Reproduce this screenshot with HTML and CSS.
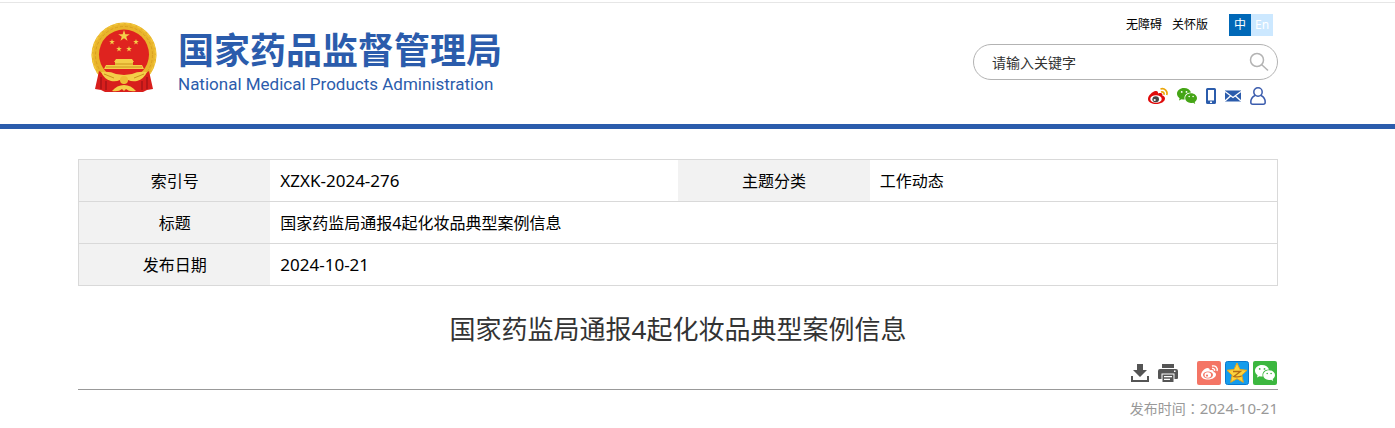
FILE: index.html
```html
<!DOCTYPE html>
<html lang="zh-CN">
<head>
<meta charset="utf-8">
<title>国家药监局通报4起化妆品典型案例信息</title>
<link rel="stylesheet" href="styles.css">
</head>
<body>
<svg class="defs" width="0" height="0" aria-hidden="true">
  <symbol id="star" viewBox="-10 -10 20 20"><path d="M0-10 2.3-3.1H9.6L3.7 1.2 5.9 8.1 0 3.8-5.9 8.1-3.7 1.2-9.6-3.1H-2.3Z"/></symbol>
  <symbol id="wechat" viewBox="0 0 20 16">
    <path fill-rule="evenodd" d="M7 0C3 0 0 2.5 0 5.8c0 1.9 1 3.4 2.6 4.5L2 12.5l2.5-1.3c.9.2 1.7.4 2.7.4h.5C6.6 7.700 9.500 4.400 14 4.500 13.300 1.800 10.500 0 7 0ZM4.700 3a.9.9 0 1 1 0 1.800.9.9 0 0 1 0-1.800ZM9.500 3a.9.9 0 1 1 0 1.800.9.9 0 0 1 0-1.800Z"/>
    <path fill-rule="evenodd" d="M14 5.200c-3.300 0-5.800 2.200-5.800 4.900s2.500 4.900 5.800 4.900c.8 0 1.400-.1 2.100-.3L18.200 16l-.5-1.900c1.400-.9 2.300-2.300 2.300-4 0-2.700-2.700-4.900-6-4.900ZM12.200 7.700a.8.8 0 1 1 0 1.600.8.8 0 0 1 0-1.600ZM16.100 7.700a.8.8 0 1 1 0 1.600.8.8 0 0 1 0-1.600Z"/>
  </symbol>
</svg>

<header class="site-header">
  <div class="container header-row">
    <a class="brand" href="#">
      <svg class="emblem" width="68" height="72" viewBox="0 0 68 72" aria-hidden="true">
        <circle cx="34" cy="33" r="32.500" fill="#e9b52c"/>
        <circle cx="34" cy="33" r="28.500" fill="none" stroke="#d9a021" stroke-width="1" stroke-dasharray="3 2"/>
        <circle cx="34" cy="33" r="31.500" fill="none" stroke="#f2c73c" stroke-width="1.500" stroke-dasharray="4 2"/>
        <circle cx="34" cy="32.500" r="25" fill="#df231f"/>
        <path fill="#d81e1c" d="M9 49q5 4 11 4h28q6 0 11-4l4 18-6 1-4 2H15l-4-2-6-1Z"/>
        <path fill="none" stroke="#a81517" stroke-width="1.500" d="M11 55v12M16 59v9M52 59v9M57 55v12"/>
        <g fill="#f4cf49">
          <use href="#star" x="28" y="8" width="12" height="12"/>
          <use href="#star" x="19" y="17" width="6" height="6"/>
          <use href="#star" x="43" y="17" width="6" height="6"/>
          <use href="#star" x="26" y="24" width="6" height="6"/>
          <use href="#star" x="36" y="24" width="6" height="6"/>
          <path d="M26 37h16l2 3h-1v3h9l2 4H14l2-4h9v-3h-1Z"/>
          <path d="M11 50q9-1 15 2l8 1 8-1q6-3 15-2-3 7-10 9-5 1-9-1l-4 4-4-4q-4 2-9 1-7-2-10-9Z"/>
          <path d="M22 69q5-6 12-6t12 6q-7 1-10-2l-2 2-2-2q-3 3-10 2Z"/>
        </g>
        <circle cx="34" cy="58" r="4" fill="#efbd35"/>
        <path fill="none" stroke="#cc921d" d="M25 42h18M16 45h36M14 52l10 4M54 52l-10 4"/>
      </svg>
      <span class="brand-text">
        <span class="brand-cn">国家药品监督管理局</span>
        <span class="brand-en">National Medical Products Administration</span>
      </span>
    </a>

    <div class="tools">
      <nav class="top-links">
        <a href="#">无障碍</a>
        <a href="#">关怀版</a>
        <span class="langs"><a class="lang active" href="#">中</a><a class="lang" href="#">En</a></span>
      </nav>
      <form class="search">
        <input type="text" aria-label="请输入关键字" placeholder="请输入关键字">
        <button type="button" aria-label="搜索">
          <svg width="20" height="20" viewBox="0 0 20 20" fill="none" stroke="#b3b3b3" stroke-width="1.500"><circle cx="8" cy="8" r="6.500"/><path d="m12.500 12.500 6.500 6"/></svg>
        </button>
      </form>
      <nav class="socials">
        <a href="#" aria-label="微博">
          <svg width="20" height="18" viewBox="0 0 20 18">
            <path fill="#df0b0b" d="M7.500 4C4.500 4.500 0 8.500 0 12c0 3.500 4 5 8 5 5 0 9-2.500 9-5.500 0-2-1.500-2.600-2.700-3 .7-2-.8-3.200-4.300-2C10.200 4.800 9.500 3.700 7.500 4Z"/>
            <ellipse cx="8" cy="12" rx="5.700" ry="3.800" fill="#fff"/>
            <ellipse cx="7.700" cy="12.200" rx="3.300" ry="3" fill="#444"/>
            <circle cx="6.700" cy="13" r="1.100" fill="#fff"/>
            <path fill="none" stroke="#eba60a" stroke-width="1.700" d="M12.500 2c4-1.300 7.600 2 6.200 6M13 5c2-.6 3.500.9 2.900 2.700"/>
          </svg>
        </a>
        <a href="#" aria-label="微信"><svg width="20" height="16" fill="#45a516"><use href="#wechat"/></svg></a>
        <a href="#" aria-label="手机版">
          <svg width="10" height="16" viewBox="0 0 10 16"><path fill="#2b5cac" fill-rule="evenodd" d="M1.500 0h7Q10 0 10 1.500v13Q10 16 8.500 16h-7Q0 16 0 14.500v-13Q0 0 1.500 0ZM2 2v10.500h6V2ZM4 13.500V15h2v-1.500Z"/></svg>
        </a>
        <a href="#" aria-label="邮箱">
          <svg width="16" height="12" viewBox="0 0 16 12"><path fill="#2b5cac" d="M0 .5h16v11H0Z"/><path fill="none" stroke="#fff" stroke-width="1.300" d="m0 1.500 8 6 8-6M0 11l5.500-5M16 11l-5.500-5"/></svg>
        </a>
        <a href="#" aria-label="用户">
          <svg width="16" height="18" viewBox="0 0 16 18" fill="none" stroke="#3b5cad" stroke-width="1.500"><circle cx="8" cy="5" r="4.200"/><path d="M5 8.500C2.300 9.800.8 12 .8 15.200q0 2 2 2h10.400q2 0 2-2C15.200 12 13.700 9.800 11 8.500"/></svg>
        </a>
      </nav>
    </div>
  </div>
</header>

<main class="page">
  <div class="container">
    <table class="info">
      <colgroup><col class="col-label"><col class="col-value"><col class="col-label"><col class="col-value"></colgroup>
      <tr><th scope="row">索引号</th><td class="latin">XZXK-2024-276</td><th scope="row">主题分类</th><td>工作动态</td></tr>
      <tr><th scope="row">标题</th><td colspan="3">国家药监局通报4起化妆品典型案例信息</td></tr>
      <tr><th scope="row">发布日期</th><td class="latin" colspan="3">2024-10-21</td></tr>
    </table>

    <h1 class="title">国家药监局通报4起化妆品典型案例信息</h1>

    <div class="actions">
      <button type="button" class="download" aria-label="下载">
        <svg width="18" height="18" viewBox="0 0 18 18" fill="#555"><path d="M6 0h6v6h4l-7 7-7-7h4ZM0 12h2v4h14v-4h2v6H0Z"/></svg>
      </button>
      <button type="button" class="print" aria-label="打印">
        <svg width="20" height="20" viewBox="0 0 20 20" fill="#555"><path fill-rule="evenodd" d="M4 1h12v4H4ZM2 6h16q2 0 2 2v7q0 1-1 1h-2.500v-5.500h-13V16H1q-1 0-1-1V8q0-2 2-2ZM16 7.500V9h1.500V7.500ZM4.500 11.500h11V19h-11ZM6 13v1.300h8V13Zm0 2.700V17h6v-1.300Z"/></svg>
      </button>
      <a href="#" aria-label="分享到微博">
        <svg width="24" height="24" viewBox="0 0 24 24">
          <rect width="24" height="24" rx="2" fill="#f47565"/>
          <path fill="#fff" d="M10.500 7C7.500 7 4 11 4 14c0 3 3.300 4.600 7 4.600 4.500 0 8-2.300 8-5 0-1.700-1.200-2.400-2.500-2.700.5-1.700-.8-2.500-3.800-1.700.2-1.200-.5-2.200-2.200-2.200Z"/>
          <ellipse cx="11" cy="14" rx="5" ry="3.400" fill="#f47565"/><ellipse cx="10.800" cy="14" rx="3.300" ry="2.700" fill="#fff"/><circle cx="10" cy="14.600" r="1.100" fill="#f47565"/>
          <path fill="none" stroke="#fff" stroke-width="1.300" d="M15 5c3.500-.8 6 1.900 5 5M15 7.500c1.800-.4 3 .7 2.600 2.300"/>
        </svg>
      </a>
      <a href="#" aria-label="分享到QQ空间">
        <svg width="24" height="24" viewBox="0 0 24 24">
          <rect x=".5" y=".5" width="23" height="23" rx="2" fill="#159cec" stroke="#0878cf"/>
          <path fill="#fcd33d" stroke="#eaa719" stroke-linejoin="round" d="m12 2 3 6.500 7 .8-5.200 4.800 1.500 7.200-6.300-3.600-6.300 3.600 1.500-7.200L2 9.300l7-.8Z"/>
          <path fill="none" stroke="#b56d15" stroke-width="1.300" d="M8 10.500h7.500L9 15.500q4 .8 7.500-.4"/>
        </svg>
      </a>
      <a href="#" aria-label="分享到微信">
        <svg width="24" height="24" viewBox="0 0 24 24"><rect width="24" height="24" rx="2" fill="#3cb73f"/><use href="#wechat" x="2" y="4" width="20" height="16" fill="#fff"/></svg>
      </a>
    </div>
    <p class="published">发布时间<span class="colon" lang="zh-TW">：</span><time datetime="2024-10-21">2024-10-21</time></p>
  </div>
</main>
</body>
</html>
```
FILE: styles.css
```css
* { box-sizing: border-box; }

body {
  margin: 0;
  color: #000;
  background: #fff;
  font-family: "Noto Sans", "Noto Sans CJK SC", sans-serif;
  font-size: 16px;
}

a { color: inherit; text-decoration: none; }
svg { display: block; }
.defs { position: absolute; }

button {
  padding: 0;
  border: 0;
  background: none;
  cursor: pointer;
}

.container { max-width: 1200px; margin: 0 auto; }

.site-header {
  margin-top: 2px;
  padding: 11px 39px 19px 0;
  border-top: 1px solid #e6e6e6;
  border-bottom: 5px solid #2b5cac;
}

.header-row { display: flex; justify-content: space-between; }

.brand {
  display: flex;
  align-items: flex-start;
  gap: 20px;
  padding: 0 0 0 12px;
  color: #2b5cac;
}

.emblem { margin-top: 8px; }
.brand-text { display: flex; flex-direction: column; padding-top: 8px; }
.brand-cn { font: bold 36px/52px "Noto Sans CJK SC", sans-serif; }
.brand-en { font: 17px/20px Roboto, sans-serif; }

.tools { display: flex; flex-direction: column; width: 305px; }

.top-links {
  display: flex;
  justify-content: flex-end;
  align-items: center;
  gap: 10px;
  padding-right: 5px;
  font-size: 12px;
  line-height: 22px;
}

.langs { display: flex; margin-left: 11px; }
.lang { width: 22px; text-align: center; color: #fff; background: #cce8ff; }
.lang.active { background: #0068b7; }

.search {
  display: flex;
  align-items: center;
  height: 36px;
  margin-top: 8px;
  padding: 0 8px 0 18px;
  border: 1px solid #b3b3b3;
  border-radius: 18px;
}

.search input {
  flex: 1;
  min-width: 0;
  padding: 0;
  border: 0;
  outline: 0;
  background: none;
  font: 14px/20px "Noto Sans CJK SC", sans-serif;
}

.search input::placeholder { color: #333; opacity: 1; }

.socials {
  display: flex;
  justify-content: flex-end;
  align-items: center;
  gap: 9px;
  margin-top: 7px;
  padding-right: 12px;
}

.page { padding: 30px 39px 0 0; }

.info {
  width: 100%;
  table-layout: fixed;
  border-collapse: collapse;
  border: 1px solid #d9d9d9;
}

.col-label { width: 16%; }
.col-value { width: 34%; }
.info tr { border-bottom: 1px solid #d9d9d9; }
.info th, .info td { height: 42px; padding: 0 10px; line-height: 24px; }
.info th { background: #f2f2f2; font-weight: normal; text-align: center; }
.info .latin { font-size: 17px; }

.title {
  margin: 23px 0 0;
  color: #333;
  font-size: 26px;
  font-weight: normal;
  line-height: 40px;
  text-align: center;
}

.actions {
  display: flex;
  justify-content: flex-end;
  align-items: center;
  gap: 4px;
  margin-top: 12px;
  padding: 0 1px 4px 0;
  border-bottom: 1px solid #999;
}

.download { margin-right: 5px; }
.print { margin-right: 15px; }

.published {
  margin: 7px 0 0;
  color: #999;
  font-size: 14px;
  line-height: 22px;
  text-align: right;
}

.colon { font-family: "Noto Sans CJK TC", sans-serif; }
.published time { font-size: 15px; }
```
